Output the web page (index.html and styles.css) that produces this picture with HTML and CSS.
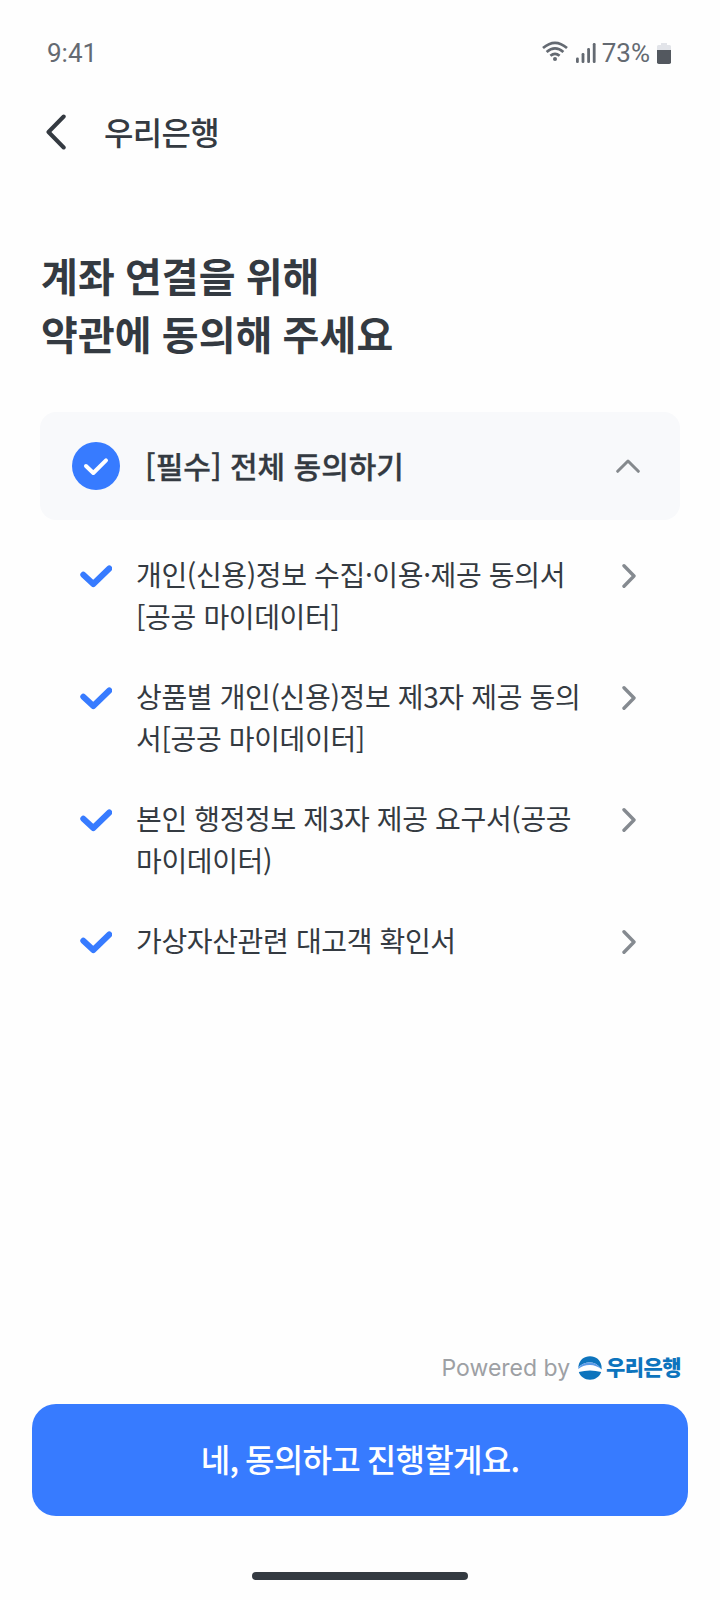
FILE: index.html
```html
<!DOCTYPE html>
<html lang="ko">
<head>
<meta charset="utf-8">
<title>우리은행</title>
<link rel="stylesheet" href="styles.css">
</head>
<body>
<div class="screen">
  <div class="status">
    <span class="time">9:41</span>
    <div class="indicators">
      <svg class="wifi" width="26" height="21" viewBox="0 0 26 21" fill="none" stroke="#646a72" stroke-width="2.7">
        <path d="M1 7Q13-3.400 25 7M4.600 11Q13 3.800 21.400 11M8.400 14.800Q13 11 17.600 14.800"/>
        <circle cx="13" cy="18" r="2" fill="#646a72" stroke="none"/>
      </svg>
      <svg class="signal" width="20" height="20" viewBox="0 0 20 20" fill="#646a72">
        <rect x="0" y="14.500" width="2.800" height="5.500" rx="1.200"/>
        <rect x="5.600" y="10" width="2.800" height="10" rx="1.200"/>
        <rect x="11.200" y="5" width="2.800" height="15" rx="1.200"/>
        <rect x="16.800" y="0" width="2.800" height="20" rx="1.200"/>
      </svg>
      <span class="percent">73%</span>
      <svg class="battery" width="14" height="21" viewBox="0 0 14 21">
        <path d="M4 0h6v2h2.500Q14 2 14 3.500V8H0V3.500Q0 2 1.500 2H4z" fill="#e2e4e9"/>
        <path d="M0 7h14v12.200q0 1.800-1.800 1.800H1.800Q0 21 0 19.200z" fill="#53585f"/>
      </svg>
    </div>
  </div>
  <header class="header">
    <svg width="20" height="36" viewBox="0 0 20 36" fill="none" stroke="#343a41" stroke-width="4" stroke-linecap="round" stroke-linejoin="round"><path d="M17.700 2.500L2.500 18l15.200 15.500"/></svg>
    <span class="header-title">우리은행</span>
  </header>
  <h1 class="title">계좌 연결을 위해<br>약관에 동의해 주세요</h1>
  <section class="all">
    <svg width="48" height="48" viewBox="0 0 48 48" fill="none"><circle cx="24" cy="24" r="24" fill="#377bff"/><path d="M14 24l7.300 7L34 18.300" stroke="#fff" stroke-width="4" stroke-linecap="round" stroke-linejoin="round"/></svg>
    <span class="all-label">[필수] 전체 동의하기</span>
    <svg width="24" height="14" viewBox="0 0 24 14" fill="none" stroke="#85898d" stroke-width="3" stroke-linecap="round" stroke-linejoin="round"><path d="M1.700 12.300L12 2l10.300 10.300"/></svg>
  </section>
  <ul class="terms">
    <li class="term">
      <svg class="check" width="32" height="24" viewBox="0 0 32 24"><path d="M3.300 10.800l10 9.200L29.300 4.500"/></svg>
      <span class="term-text">개인(신용)정보 수집·이용·제공 동의서<br>[공공 마이데이터]</span>
      <svg class="chevron" width="14" height="24" viewBox="0 0 14 24"><path d="M2 1.800L12 12 2 22.200"/></svg>
    </li>
    <li class="term">
      <svg class="check" width="32" height="24" viewBox="0 0 32 24"><path d="M3.300 10.800l10 9.200L29.300 4.500"/></svg>
      <span class="term-text">상품별 개인(신용)정보 제3자 제공 동의<br>서[공공 마이데이터]</span>
      <svg class="chevron" width="14" height="24" viewBox="0 0 14 24"><path d="M2 1.800L12 12 2 22.200"/></svg>
    </li>
    <li class="term">
      <svg class="check" width="32" height="24" viewBox="0 0 32 24"><path d="M3.300 10.800l10 9.200L29.300 4.500"/></svg>
      <span class="term-text">본인 행정정보 제3자 제공 요구서(공공<br>마이데이터)</span>
      <svg class="chevron" width="14" height="24" viewBox="0 0 14 24"><path d="M2 1.800L12 12 2 22.200"/></svg>
    </li>
    <li class="term">
      <svg class="check" width="32" height="24" viewBox="0 0 32 24"><path d="M3.300 10.800l10 9.200L29.300 4.500"/></svg>
      <span class="term-text">가상자산관련 대고객 확인서</span>
      <svg class="chevron" width="14" height="24" viewBox="0 0 14 24"><path d="M2 1.800L12 12 2 22.200"/></svg>
    </li>
  </ul>
  <footer class="footer">
    <div class="powered">
      <span class="powered-text">Powered by</span>
      <svg class="logo" width="24" height="24" viewBox="0 0 24 24">
        <path d="M0.500 10C1.500 4 6 0.300 12 0.300S22.500 4 23.500 10L23.700 13.500Q18.500 6.300 11.500 6.300Q5 6.500 0.300 11.500z" fill="#0d74bd"/>
        <path d="M0.300 11.500Q5 6.500 11.500 6.300Q18.500 6.300 23.700 13.500Q18 8.800 11.500 9Q5 9.200 0.300 13z" fill="#5b9be8"/>
        <path d="M0.800 16Q12 12.800 23.200 16C21.500 20.700 17.500 23.700 12 23.700S2.500 20.700 0.800 16z" fill="#0d74bd"/>
      </svg>
      <span class="brand">우리은행</span>
    </div>
    <button class="agree">네, 동의하고 진행할게요.</button>
    <div class="home"></div>
  </footer>
</div>
</body>
</html>
```
FILE: styles.css
```css
* { box-sizing: border-box; }
body {
  margin: 0;
  background: #fefefe;
  color: #343a41;
  font-family: "Noto Sans CJK KR", sans-serif;
}
svg { display: block; flex: none; }
.screen {
  width: 720px;
  height: 1600px;
  display: flex;
  flex-direction: column;
  white-space: nowrap;
}
.status {
  height: 32px;
  margin: 37px 48px 0 47px;
  display: flex;
  justify-content: space-between;
  align-items: center;
  font: 26px/32px Roboto, sans-serif;
  color: #646a72;
}
.indicators { display: flex; align-items: center; }
.wifi { margin: 0 8px 4px 0; }
.signal { margin-right: 6px; }
.percent { margin-right: 7px; }
.battery { margin-right: 1px; }
.header {
  height: 48px;
  margin: 39px 0 0 46px;
  display: flex;
  align-items: center;
  gap: 38px;
}
.header-title { padding-bottom: 2px; font-size: 32px; font-weight: 500; letter-spacing: -0.7px; line-height: 46px; }
.title {
  margin: 90px 0 0 41px;
  font-size: 40px;
  font-weight: 700;
  line-height: 58px;
  letter-spacing: 0.1px;
  word-spacing: -1.2px;
}
.all {
  height: 108px;
  margin: 50px 40px 0;
  padding: 0 40px 0 32px;
  border-radius: 16px;
  background: #f8f9fb;
  display: flex;
  align-items: center;
}
.all-label { flex: 1; margin-left: 25px; padding-bottom: 2px; font-size: 30px; font-weight: 500; line-height: 46px; -webkit-text-stroke: 0.3px #343a41; }
.terms {
  list-style: none;
  margin: 33px 84px 0 80px;
  padding: 0;
  display: flex;
  flex-direction: column;
  gap: 38px;
}
.term { display: flex; align-items: flex-start; }
.term-text { flex: 1; margin-left: 24px; font-size: 28px; line-height: 42px; letter-spacing: -0.36px; }
.check { margin-top: 11px; fill: none; stroke: #377bff; stroke-width: 6; stroke-linecap: round; stroke-linejoin: round; }
.chevron { margin-top: 11px; fill: none; stroke: #858a90; stroke-width: 3.4; stroke-linecap: round; stroke-linejoin: round; }
.footer { margin-top: auto; padding: 0 32px 20px; }
.powered {
  height: 32px;
  margin: 0 7px 20px 0;
  display: flex;
  justify-content: flex-end;
  align-items: center;
}
.powered-text { font: 23px/32px Inter, sans-serif; color: #9da0a4; }
.logo { margin: 0 4px 1px 8px; }
.brand { padding-bottom: 3px; font-size: 21px; font-weight: 900; line-height: 29px; letter-spacing: -0.6px; color: #0d74bd; }
.agree {
  display: block;
  width: 656px;
  height: 112px;
  border: 0;
  padding: 0 0 4px;
  border-radius: 24px;
  background: #377bff;
  color: #fff;
  font: 500 32px/48px "Noto Sans CJK KR", sans-serif;
  letter-spacing: -0.7px;
  word-spacing: -1.500px;
}
.home { width: 216px; height: 8px; margin: 56px auto 0; border-radius: 4px; background: #343a41; }
```
